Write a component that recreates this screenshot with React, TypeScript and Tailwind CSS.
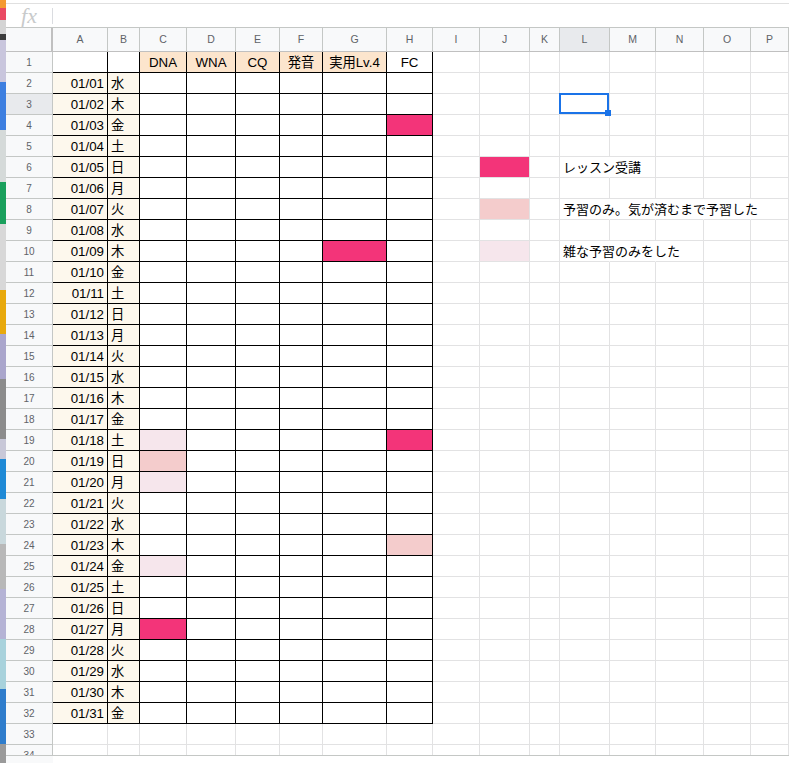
const COLS = "ABCDEFGHIJKLMNOP".split("");

// column widths incl. right grid line
const WIDTHS = [
  "w-[55px]",
  "w-[32px]",
  "w-[47px]",
  "w-[49px]",
  "w-[44px]",
  "w-[43px]",
  "w-[64px]",
  "w-[46px]",
  "w-[47px]",
  "w-[50px]",
  "w-[30px]",
  "w-[50px]",
  "w-[46px]",
  "w-[48px]",
  "w-[47px]",
  "flex-1 min-w-0",
];

const DEEP = "bg-[#f33479]";
const LIGHT = "bg-[#f4cccc]";
const PALE = "bg-[#f6e6ec]";
const CREAM = "bg-[#fdf8ed]";
const PEACH = "bg-[#fce5cd]";

const FILLS: Record<string, string> = {
  H4: DEEP,
  G10: DEEP,
  C19: PALE,
  H19: DEEP,
  C20: LIGHT,
  C21: PALE,
  H24: LIGHT,
  C25: PALE,
  C28: DEEP,
  J6: DEEP,
  J8: LIGHT,
  J10: PALE,
};

const HEADERS: Record<string, string> = {
  C: "DNA",
  D: "WNA",
  E: "CQ",
  F: "発音",
  G: "実用Lv.4",
  H: "FC",
};

const LEGEND: Record<number, { text: string; span: string[] }> = {
  6: { text: "レッスン受講", span: ["L"] },
  8: { text: "予習のみ。気が済むまで予習した", span: ["L", "M", "N", "O"] },
  10: { text: "雑な予習のみをした", span: ["L", "M"] },
};

const WEEK = ["水", "木", "金", "土", "日", "月", "火"];

// bits of the desktop peeking out on the left
const STRIP = [
  ["h-[8px]", "bg-[#f49a32]"],
  ["h-[12px]", "bg-[#ea4a63]"],
  ["h-[14px]", "bg-[#d4d4d4]"],
  ["h-[6px]", "bg-[#3c3c3c]"],
  ["h-[42px]", "bg-[#c9c6dd]"],
  ["h-[48px]", "bg-[#3d7fe0]"],
  ["h-[52px]", "bg-[#d5dad9]"],
  ["h-[42px]", "bg-[#1aa05c]"],
  ["h-[66px]", "bg-[#d8d8d8]"],
  ["h-[44px]", "bg-[#e8a90c]"],
  ["h-[45px]", "bg-[#aaa6cc]"],
  ["h-[60px]", "bg-[#8c8c8c]"],
  ["h-[20px]", "bg-[#c8c8d8]"],
  ["h-[40px]", "bg-[#1f8ad6]"],
  ["h-[45px]", "bg-[#c9d8dc]"],
  ["h-[45px]", "bg-[#b8b8b8]"],
  ["h-[50px]", "bg-[#b5b3d5]"],
  ["h-[50px]", "bg-[#a8d2dc]"],
  ["h-[55px]", "bg-[#2f7dcc]"],
  ["flex-1", "bg-[#9a9a9a]"],
];

const Cell = ({ row, ci }: { row: number; ci: number }) => {
  const col = COLS[ci];
  const key = `${col}${row}`;
  const inTable = row <= 32 && ci <= 7;
  const legend = LEGEND[row];
  const hideRight = legend && legend.span.includes(col);

  let bg = FILLS[key] || "";
  let content: React.ReactNode = null;
  let align = "justify-start pl-[3px]";
  let size = "text-[13.3px]";

  if (row === 1 && HEADERS[col]) {
    if (col !== "H") bg = PEACH;
    content = HEADERS[col];
    align = "justify-center";
  } else if (row >= 2 && row <= 32 && ci === 0) {
    bg = CREAM;
    content = `01/${String(row - 1).padStart(2, "0")}`;
    align = "justify-end pr-[3px]";
  } else if (row >= 2 && row <= 32 && ci === 1) {
    bg = CREAM;
    content = WEEK[(row - 2) % 7];
  } else if (legend && col === "L") {
    content = legend.text;
    size = "text-[13px]";
  }

  const border = inTable ? "border-black" : "border-[#e2e2e3]";

  return (
    <div
      className={`${WIDTHS[ci]} shrink-0 relative flex items-center border-r border-b ${border} ${
        hideRight ? "border-r-transparent" : ""
      } ${bg} ${align}`}
    >
      {content && (
        <span className={`relative z-10 whitespace-nowrap leading-[15px] ${size} text-black`}>
          {content}
        </span>
      )}
      {key === "L3" && (
        <div className="absolute -left-px -top-px right-0 bottom-0 z-20 border-2 border-[#1a73e8]">
          <div className="absolute -right-[4px] -bottom-[4px] w-[6px] h-[6px] bg-[#1a73e8]" />
        </div>
      )}
    </div>
  );
};

export default function App() {
  const rows = Array.from({ length: 34 }, (_, i) => i + 1);

  return (
    <div
      className="w-[789px] h-[763px] overflow-hidden flex bg-white"
      style={{ fontFamily: '"Liberation Sans", Arial, "Noto Sans CJK JP", sans-serif' }}
    >
      {/* background windows strip */}
      <div className="w-[6px] shrink-0 flex flex-col">
        {STRIP.map(([h, c], i) => (
          <div key={i} className={`${h} ${c} shrink-0`} />
        ))}
      </div>

      <div className="flex-1 min-w-0 flex flex-col">
        {/* Formula bar */}
        <div className="h-[28px] shrink-0 flex flex-col">
          <div className="h-[3px]" />
          <div className="flex-1 flex items-center border-t border-b border-t-[#e0e0e0] border-b-[#c4c7c5]">
            <span className="w-[46px] text-center italic text-[22px] leading-none text-[#c8cacb] font-['Liberation_Serif',serif]">
              fx
            </span>
            <div className="w-px h-[16px] bg-[#dadce0]" />
          </div>
        </div>

        {/* Column headers */}
        <div className="h-[24px] shrink-0 flex border-b border-[#c0c0c0] bg-[#f8f9fa]">
          <div className="w-[47px] shrink-0 border-r-2 border-[#c0c0c0]" />
          {COLS.map((c, ci) => (
            <div
              key={c}
              className={`${WIDTHS[ci]} shrink-0 flex items-center justify-center border-r border-[#c4c7c5] text-[10.5px] text-[#5f6368] ${
                c === "L" ? "bg-[#e8eaed]" : ""
              }`}
            >
              {c}
            </div>
          ))}
        </div>

        {/* Grid */}
        <div className="h-[703px] shrink-0 overflow-hidden flex flex-col">
          {rows.map((r) => (
            <div key={r} className="h-[21px] shrink-0 flex">
              <div
                className={`w-[47px] shrink-0 flex items-center justify-center border-r border-b border-[#c4c7c5] text-[10px] text-[#5f6368] ${
                  r === 3 ? "bg-[#e8eaed]" : "bg-[#f8f9fa]"
                }`}
              >
                {r}
              </div>
              {COLS.map((c, ci) => (
                <Cell key={c} row={r} ci={ci} />
              ))}
            </div>
          ))}
        </div>

        {/* bottom edge */}
        <div className="flex-1 flex border-t border-[#c4c7c5]">
          <div className="w-[47px] bg-[#f8f9fa]" />
          <div className="flex-1 bg-white" />
        </div>
      </div>
    </div>
  );
}
